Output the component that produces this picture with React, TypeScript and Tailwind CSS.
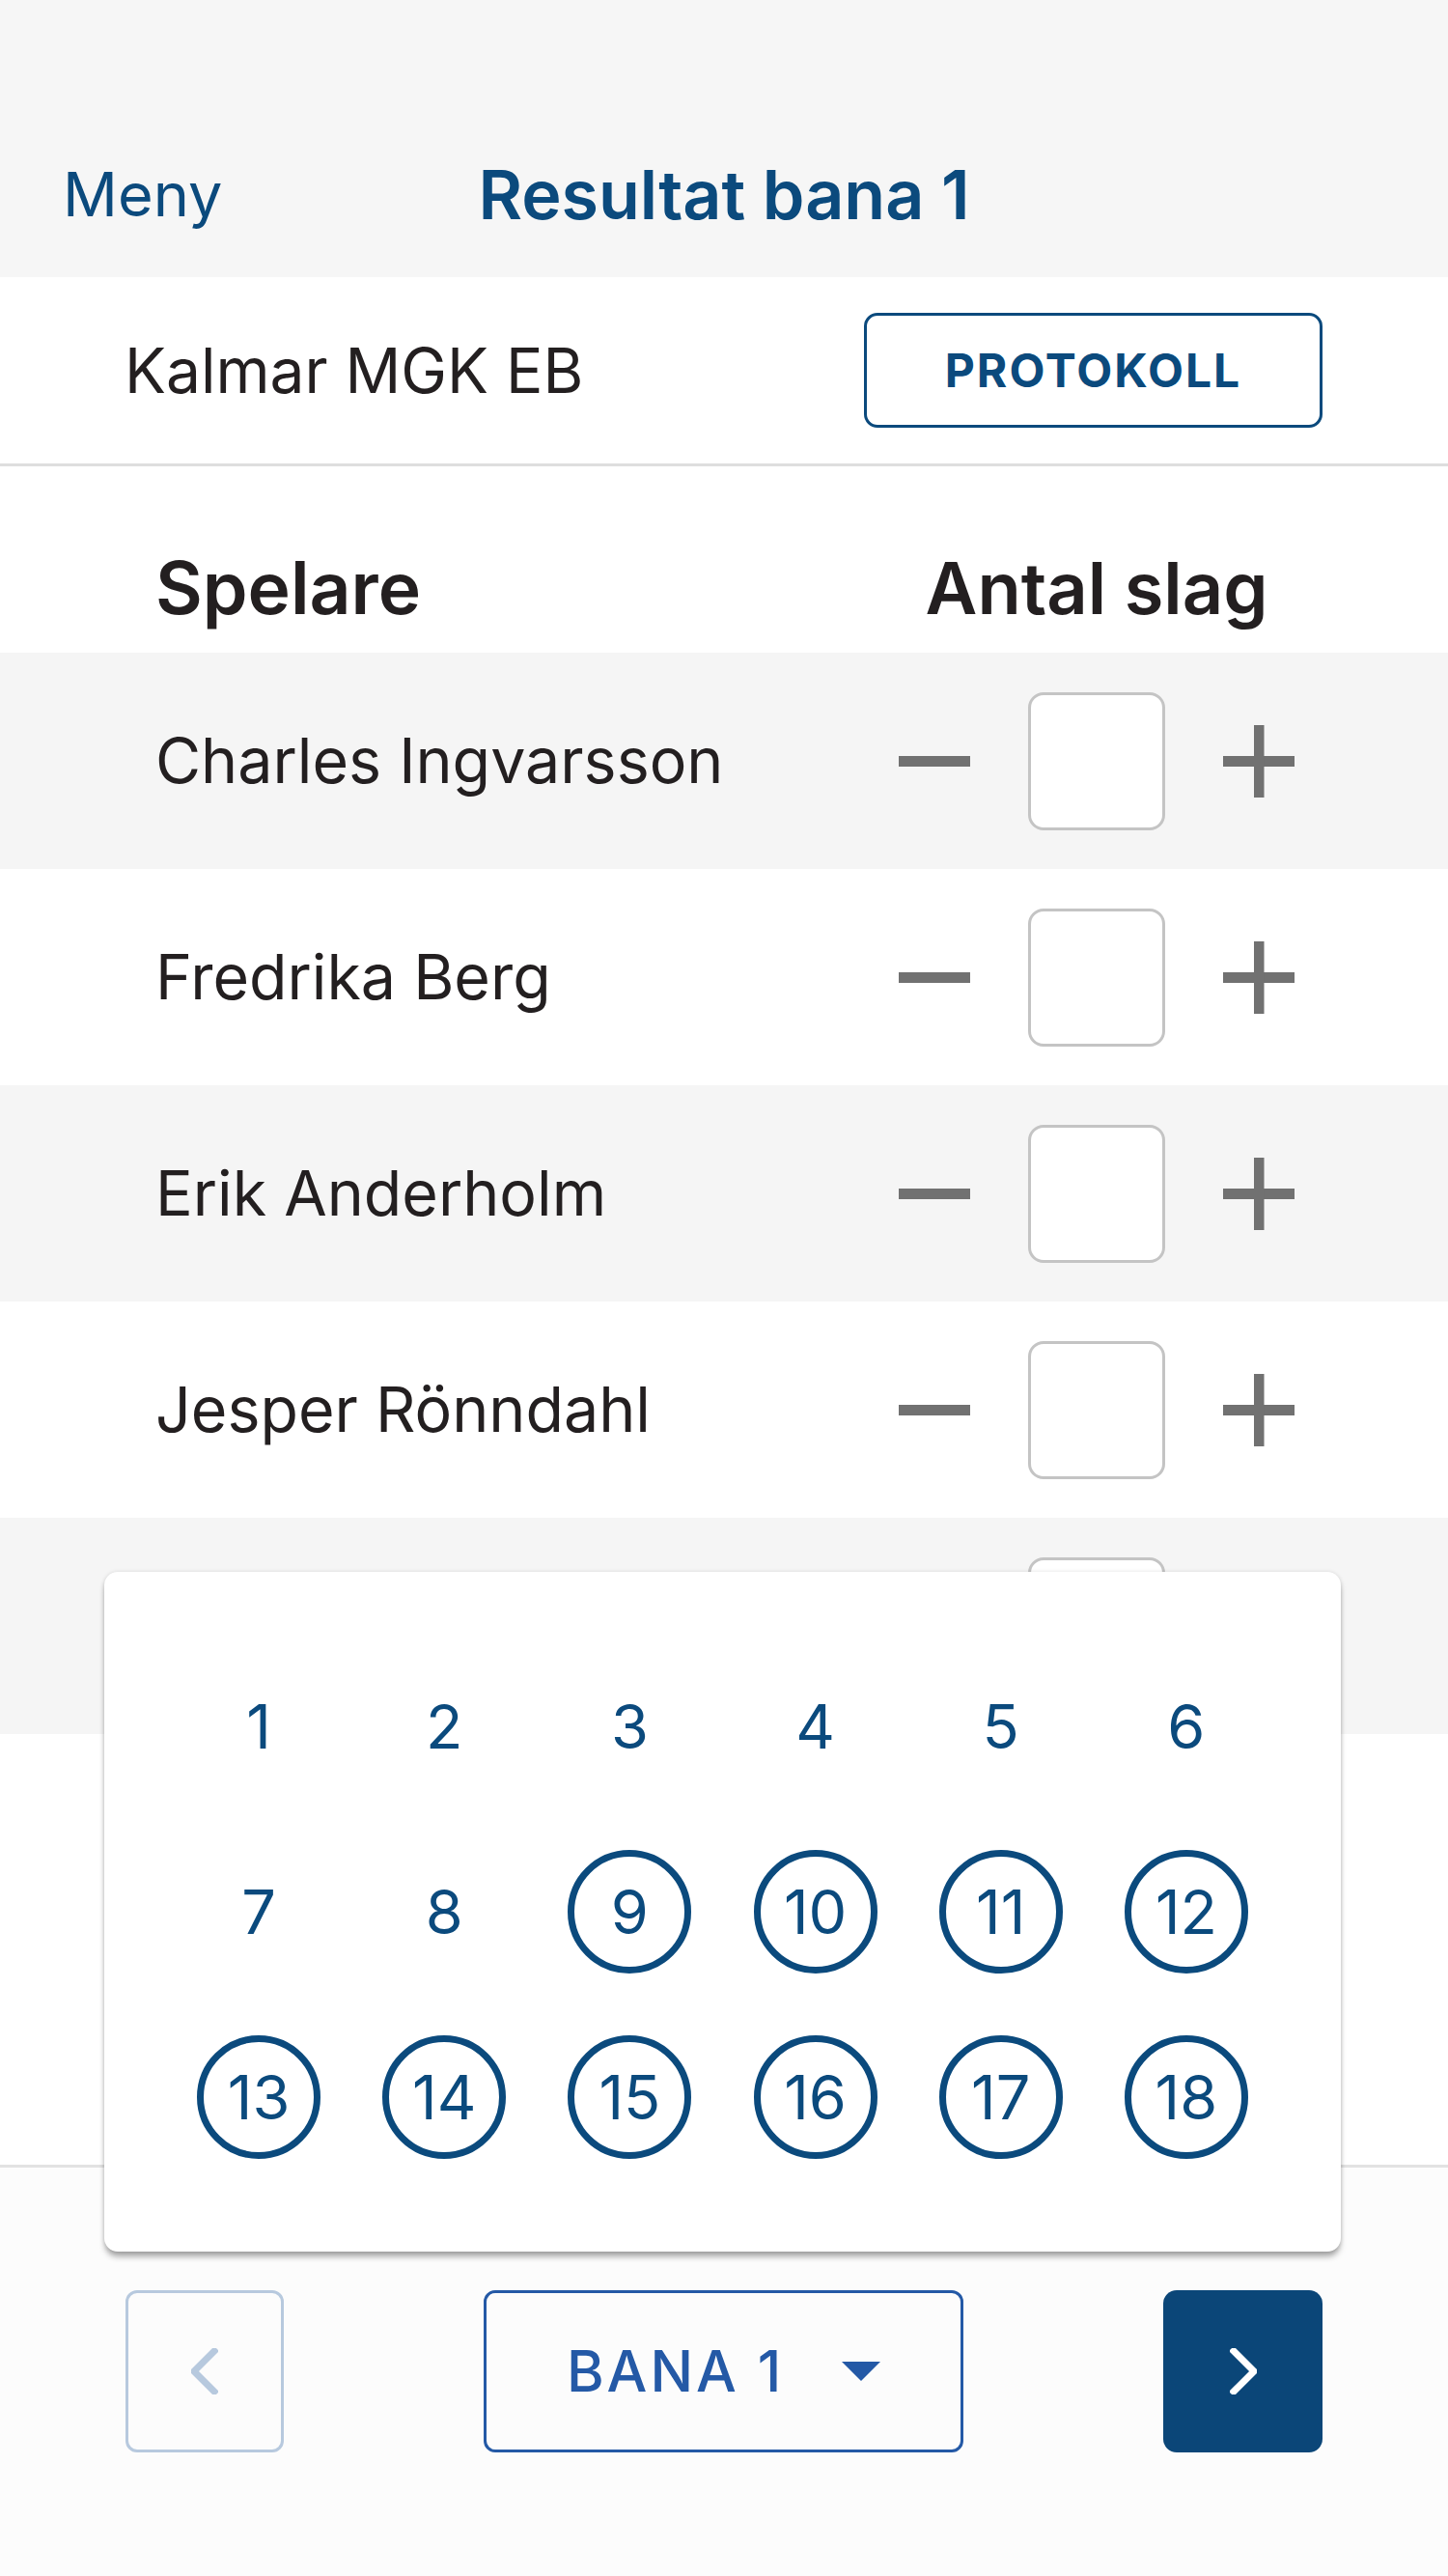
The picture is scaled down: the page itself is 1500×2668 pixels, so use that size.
import React from "react";

const players = [
  "Charles Ingvarsson",
  "Fredrika Berg",
  "Erik Anderholm",
  "Jesper Rönndahl",
  "Anna Lindqvist",
];

const holes = Array.from({ length: 18 }, (_, i) => i + 1);
const played = 8;

function Minus() {
  return (
    <svg width="74" height="11" viewBox="0 0 74 11">
      <rect width="74" height="11" fill="#717171" />
    </svg>
  );
}

function Plus() {
  return (
    <svg width="74" height="75" viewBox="0 0 74 75">
      <rect x="0" y="32" width="74" height="11" fill="#717171" />
      <rect x="32" y="0" width="10.5" height="75" fill="#717171" />
    </svg>
  );
}

function Chevron({ dir, color }: { dir: "left" | "right"; color: string }) {
  const pts = dir === "right" ? "4,3 25,24 4,45" : "24,3 3,24 24,45";
  return (
    <svg width="28" height="48" viewBox="0 0 28 48">
      <polyline points={pts} fill="none" stroke={color} strokeWidth="7" strokeLinecap="square" />
    </svg>
  );
}

function PlayerRow({ name, striped }: { name: string; striped: boolean }) {
  return (
    <div
      className={
        "flex h-[224px] items-center justify-between pl-[161px] pr-[159px] " +
        (striped ? "bg-[#f5f5f5]" : "bg-white")
      }
    >
      <span className="text-[64.5px] text-[#231f20]">{name}</span>
      <div className="flex w-[410px] items-center justify-between">
        <button className="flex h-[75px] w-[74px] items-center justify-center">
          <Minus />
        </button>
        <div className="h-[143px] w-[142px] rounded-[16px] border-[3px] border-[#c4c4c4] bg-white" />
        <button className="flex h-[75px] w-[74px] items-center justify-center">
          <Plus />
        </button>
      </div>
    </div>
  );
}

export default function App() {
  return (
    <div
      className="relative flex h-[2668px] w-[1500px] flex-col bg-white"
      style={{ fontFamily: "Inter, 'Noto Sans', sans-serif" }}
    >
      <header className="grid h-[287px] grid-cols-[1fr_auto_1fr] items-center bg-[#f6f6f6] pt-[115px]">
        <span className="pl-[65px] text-[63px] text-[#0b4a7d]">Meny</span>
        <h1 className="text-[70px] font-semibold text-[#0b4a7d]">Resultat bana 1</h1>
        <span />
      </header>

      <main className="flex flex-1 flex-col">
        <div className="flex h-[196px] items-center justify-between border-b-[3px] border-[#dedede] pl-[129px] pr-[130px]">
          <span className="text-[64px] text-[#231f20]">Kalmar MGK EB</span>
          <button className="flex h-[119px] w-[475px] items-center justify-center rounded-[14px] border-[3px] border-[#0b4a7d] text-[48px] font-bold tracking-[2px] text-[#0b4a7d]">
            PROTOKOLL
          </button>
        </div>

        <div className="flex h-[193px] items-center justify-between pl-[161px] pr-[159px] pt-[60px]">
          <span className="text-[75px] font-semibold text-[#231f20]">Spelare</span>
          <span className="w-[410px] whitespace-nowrap text-center text-[74px] font-semibold text-[#231f20]">Antal slag</span>
        </div>

        {players.map((p, i) => (
          <PlayerRow key={p} name={p} striped={i % 2 === 0} />
        ))}
      </main>

      <footer className="flex h-[426px] items-start justify-between border-t-[3px] border-[#e2e2e2] bg-[#fcfcfc] px-[130px] pt-[127px]">
        <button className="flex h-[168px] w-[164px] items-center justify-center rounded-[12px] border-[3px] border-[#b7c9de]">
          <Chevron dir="left" color="#b7c9de" />
        </button>
        <button className="flex h-[168px] w-[497px] items-center justify-center gap-[60px] rounded-[12px] border-[3px] border-[#2459a6]">
          <span className="text-[59px] font-medium tracking-[3px] text-[#2459a6]">BANA 1</span>
          <svg width="40" height="20" viewBox="0 0 40 20">
            <polygon points="0,0 40,0 20,20" fill="#2459a6" />
          </svg>
        </button>
        <button className="flex h-[168px] w-[165px] items-center justify-center rounded-[14px] bg-[#0b4678]">
          <Chevron dir="right" color="#ffffff" />
        </button>
      </footer>

      <div className="absolute left-[108px] top-[1628px] w-[1281px] rounded-[14px] bg-white p-[64px] shadow-[0_6px_6px_-1px_rgba(0,0,0,0.35),0_0_4px_rgba(0,0,0,0.12)]">
        <div className="grid grid-cols-6">
          {holes.map((h) => (
            <div key={h} className="flex h-[192px] items-center justify-center">
              <span
                className={
                  "flex h-[128px] w-[128px] items-center justify-center rounded-full text-[63px] text-[#0b4a7d] " +
                  (h > played ? "border-[7px] border-[#0b4a7d]" : "")
                }
              >
                {h}
              </span>
            </div>
          ))}
        </div>
      </div>
    </div>
  );
}
